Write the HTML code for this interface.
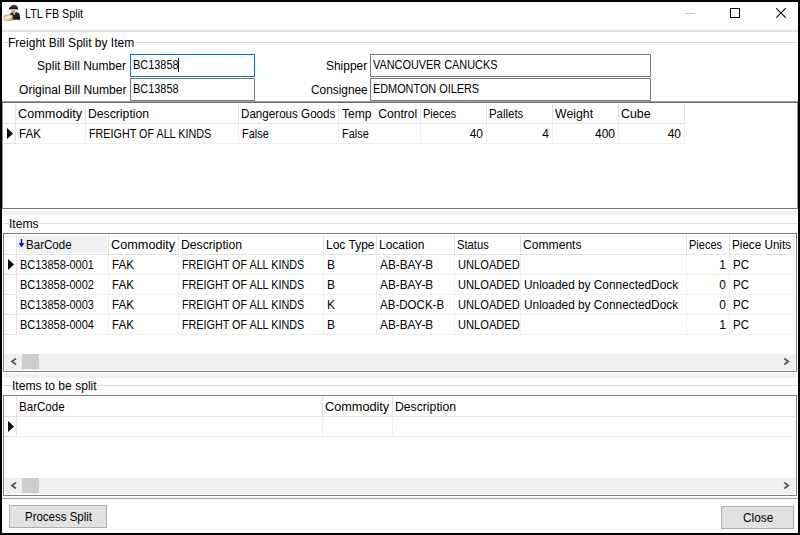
<!DOCTYPE html>
<html><head><meta charset="utf-8"><title>LTL FB Split</title>
<style>
html,body{margin:0;padding:0;}
body{width:800px;height:535px;position:relative;overflow:hidden;background:#fff;font-family:"Liberation Sans", sans-serif;font-size:12px;color:#000}
body>div{position:absolute;box-sizing:content-box}
.t{white-space:nowrap;line-height:14px;height:14px}
</style></head><body>
<div style="left:0px;top:0px;width:800px;height:2px;background:#000"></div>
<div style="left:0px;top:533px;width:800px;height:2px;background:#000"></div>
<div style="left:0px;top:0px;width:2px;height:535px;background:#000"></div>
<div style="left:798px;top:0px;width:2px;height:535px;background:#000"></div>
<svg style="position:absolute;left:2px;top:3px" width="22" height="20" viewBox="0 0 22 20">
<defs><linearGradient id="hat" x1="0" y1="0" x2="0" y2="1"><stop offset="0" stop-color="#505050"/><stop offset="1" stop-color="#0a0a0a"/></linearGradient>
<linearGradient id="bd" x1="0" y1="0" x2="1" y2="1"><stop offset="0" stop-color="#404040"/><stop offset="1" stop-color="#0d0d0d"/></linearGradient>
<linearGradient id="fc" x1="0" y1="0" x2="0" y2="1"><stop offset="0" stop-color="#f0d890"/><stop offset="1" stop-color="#c09040"/></linearGradient>
<linearGradient id="box" x1="0" y1="0" x2="1" y2="1"><stop offset="0" stop-color="#e2cc8e"/><stop offset="0.45" stop-color="#f8ecc8"/><stop offset="1" stop-color="#a88a4e"/></linearGradient></defs>
<path d="M7.3 16.8 L7.3 12 Q8.3 9.2 11.3 9 L14 9 Q18 9.5 18 13.5 L18 16.8 Z" fill="url(#bd)"/>
<ellipse cx="11.4" cy="7.6" rx="2.3" ry="2.1" fill="url(#fc)"/>
<path d="M11.1 9.3 L13.6 9.3 L12.3 12.2 Z" fill="#e8e8e8"/>
<path d="M6.8 6.4 Q6.8 4 8.9 3.2 Q9.9 1.8 12 1.8 Q14.8 1.8 15.6 4 Q16.2 5.2 15.8 6.4 Q11.5 5.5 6.8 6.4 Z" fill="url(#hat)"/>
<path d="M2 13 Q2.4 12 3.6 12 L9.6 12 Q10.6 12.3 10.6 13.3 L10.6 16.6 Q10.4 17.6 9.4 17.6 L3.2 17.6 Q2 17.4 2 16.2 Z" fill="url(#box)" stroke="#9c8150" stroke-width="0.5"/>
</svg>
<div class="t" style="left:25px;top:7px;transform:scaleX(0.8969);transform-origin:left center;color:#000">LTL FB Split</div>
<div style="left:685px;top:13px;width:10px;height:1px;background:#c6c6c6"></div>
<div style="left:730px;top:8px;width:8px;height:8px;border:1px solid #000;box-sizing:content-box"></div>
<svg style="position:absolute;left:776px;top:8px" width="10" height="10" viewBox="0 0 10 10"><path d="M0.3 0.3 L9.7 9.7 M9.7 0.3 L0.3 9.7" stroke="#000" stroke-width="1.05"/></svg>
<div style="left:2px;top:29px;width:796px;height:2px;background:#f0f0f0"></div>
<div style="left:2px;top:31px;width:796px;height:1px;background:#dadada"></div>
<div style="left:3px;top:42px;width:795px;height:1px;background:#dcdcdc"></div>
<div class="t" style="left:8px;top:36px;transform:scaleX(1.0016);transform-origin:left center;background:#fff;color:#000">Freight Bill Split by Item</div>
<div class="t" style="left:37px;top:59px;transform:scaleX(1.0034);transform-origin:left center;color:#000">Split Bill Number</div>
<div class="t" style="left:19px;top:83px;transform:scaleX(1.0066);transform-origin:left center;color:#000">Original Bill Number</div>
<div style="left:130px;top:54px;width:123px;height:21px;border:1px solid #0078d7"></div>
<div style="left:130px;top:78px;width:123px;height:21px;border:1px solid #7a7a7a"></div>
<div class="t" style="left:133px;top:58px;transform:scaleX(0.9104);transform-origin:left center;color:#000">BC13858</div>
<div style="left:178px;top:58px;width:1px;height:14px;background:#000"></div>
<div class="t" style="left:133px;top:82px;transform:scaleX(0.9104);transform-origin:left center;color:#000">BC13858</div>
<div class="t" style="left:326px;top:59px;transform:scaleX(0.995);transform-origin:left center;color:#000">Shipper</div>
<div class="t" style="left:311px;top:83px;transform:scaleX(0.9875);transform-origin:left center;color:#000">Consignee</div>
<div style="left:370px;top:54px;width:279px;height:21px;border:1px solid #7a7a7a"></div>
<div style="left:370px;top:78px;width:279px;height:21px;border:1px solid #7a7a7a"></div>
<div class="t" style="left:373px;top:58px;transform:scaleX(0.9073);transform-origin:left center;color:#000">VANCOUVER CANUCKS</div>
<div class="t" style="left:373px;top:82px;transform:scaleX(0.906);transform-origin:left center;color:#000">EDMONTON OILERS</div>
<div style="left:2px;top:101px;width:796px;height:1px;background:#a0a0a0"></div>
<div style="left:2px;top:102px;width:796px;height:1px;background:#6d6d6d"></div>
<div style="left:2px;top:101px;width:1px;height:108px;background:#8a8a8a"></div>
<div style="left:797px;top:101px;width:1px;height:108px;background:#8a8a8a"></div>
<div style="left:2px;top:208px;width:796px;height:1px;background:#777"></div>
<div style="left:4px;top:123px;width:681px;height:1px;background:#e3e3e3"></div>
<div style="left:4px;top:143px;width:11px;height:1px;background:#e3e3e3"></div>
<div style="left:15px;top:143px;width:670px;height:1px;background:#f0f0f0"></div>
<div style="left:15px;top:104px;width:1px;height:40px;background:#e3e3e3"></div>
<div style="left:85px;top:104px;width:1px;height:19px;background:#e3e3e3"></div>
<div style="left:85px;top:124px;width:1px;height:20px;background:#f0f0f0"></div>
<div style="left:238px;top:104px;width:1px;height:19px;background:#e3e3e3"></div>
<div style="left:238px;top:124px;width:1px;height:20px;background:#f0f0f0"></div>
<div style="left:338px;top:104px;width:1px;height:19px;background:#e3e3e3"></div>
<div style="left:338px;top:124px;width:1px;height:20px;background:#f0f0f0"></div>
<div style="left:420px;top:104px;width:1px;height:19px;background:#e3e3e3"></div>
<div style="left:420px;top:124px;width:1px;height:20px;background:#f0f0f0"></div>
<div style="left:486px;top:104px;width:1px;height:19px;background:#e3e3e3"></div>
<div style="left:486px;top:124px;width:1px;height:20px;background:#f0f0f0"></div>
<div style="left:552px;top:104px;width:1px;height:19px;background:#e3e3e3"></div>
<div style="left:552px;top:124px;width:1px;height:20px;background:#f0f0f0"></div>
<div style="left:618px;top:104px;width:1px;height:19px;background:#e3e3e3"></div>
<div style="left:618px;top:124px;width:1px;height:20px;background:#f0f0f0"></div>
<div style="left:684px;top:104px;width:1px;height:19px;background:#e3e3e3"></div>
<div style="left:684px;top:124px;width:1px;height:20px;background:#f0f0f0"></div>
<div class="t" style="left:18px;top:107px;transform:scaleX(1.0583);transform-origin:left center;color:#000">Commodity</div>
<div class="t" style="left:88px;top:107px;transform:scaleX(1.0172);transform-origin:left center;color:#000">Description</div>
<div class="t" style="left:241px;top:107px;transform:scaleX(0.9688);transform-origin:left center;color:#000">Dangerous Goods</div>
<div class="t" style="left:342px;top:107px;transform:scaleX(1.0068);transform-origin:left center;color:#000">Temp&nbsp; Control</div>
<div class="t" style="left:423px;top:107px;transform:scaleX(0.92);transform-origin:left center;color:#000">Pieces</div>
<div class="t" style="left:489px;top:107px;transform:scaleX(0.9514);transform-origin:left center;color:#000">Pallets</div>
<div class="t" style="left:555px;top:107px;transform:scaleX(1.027);transform-origin:left center;color:#000">Weight</div>
<div class="t" style="left:621px;top:107px;transform:scaleX(1.0333);transform-origin:left center;color:#000">Cube</div>
<div class="t" style="left:19px;top:127px;transform:scaleX(0.9667);transform-origin:left center;color:#000">FAK</div>
<div class="t" style="left:89px;top:127px;transform:scaleX(0.8978);transform-origin:left center;color:#000">FREIGHT OF ALL KINDS</div>
<div class="t" style="left:242px;top:127px;transform:scaleX(0.9107);transform-origin:left center;color:#000">False</div>
<div class="t" style="left:342px;top:127px;transform:scaleX(0.9107);transform-origin:left center;color:#000">False</div>
<div class="t" style="left:83px;width:400px;text-align:right;top:127px;color:#000">40</div>
<div class="t" style="left:149px;width:400px;text-align:right;top:127px;color:#000">4</div>
<div class="t" style="left:215px;width:400px;text-align:right;top:127px;color:#000">400</div>
<div class="t" style="left:281px;width:400px;text-align:right;top:127px;color:#000">40</div>
<svg style="position:absolute;left:7px;top:128px" width="7" height="11"><path d="M0 0 L6 5.5 L0 11 Z" fill="#000"/></svg>
<div style="left:3px;top:211px;width:794px;height:4px;background:#f0f0f0"></div>
<div style="left:3px;top:223px;width:795px;height:1px;background:#dcdcdc"></div>
<div class="t" style="left:9px;top:217px;transform:scaleX(1.0107);transform-origin:left center;background:#fff;color:#000">Items</div>
<div style="left:3px;top:233px;width:792px;height:137px;border:1px solid #7f7f7f"></div>
<div style="left:4px;top:254px;width:790px;height:1px;background:#e3e3e3"></div>
<div style="left:4px;top:274px;width:12px;height:1px;background:#e3e3e3"></div>
<div style="left:16px;top:274px;width:778px;height:1px;background:#f0f0f0"></div>
<div style="left:4px;top:294px;width:12px;height:1px;background:#e3e3e3"></div>
<div style="left:16px;top:294px;width:778px;height:1px;background:#f0f0f0"></div>
<div style="left:4px;top:314px;width:12px;height:1px;background:#e3e3e3"></div>
<div style="left:16px;top:314px;width:778px;height:1px;background:#f0f0f0"></div>
<div style="left:4px;top:334px;width:12px;height:1px;background:#e3e3e3"></div>
<div style="left:16px;top:334px;width:778px;height:1px;background:#f0f0f0"></div>
<div style="left:16px;top:235px;width:1px;height:100px;background:#e3e3e3"></div>
<div style="left:108px;top:235px;width:1px;height:19px;background:#e3e3e3"></div>
<div style="left:108px;top:255px;width:1px;height:80px;background:#f0f0f0"></div>
<div style="left:178px;top:235px;width:1px;height:19px;background:#e3e3e3"></div>
<div style="left:178px;top:255px;width:1px;height:80px;background:#f0f0f0"></div>
<div style="left:323px;top:235px;width:1px;height:19px;background:#e3e3e3"></div>
<div style="left:323px;top:255px;width:1px;height:80px;background:#f0f0f0"></div>
<div style="left:376px;top:235px;width:1px;height:19px;background:#e3e3e3"></div>
<div style="left:376px;top:255px;width:1px;height:80px;background:#f0f0f0"></div>
<div style="left:454px;top:235px;width:1px;height:19px;background:#e3e3e3"></div>
<div style="left:454px;top:255px;width:1px;height:80px;background:#f0f0f0"></div>
<div style="left:520px;top:235px;width:1px;height:19px;background:#e3e3e3"></div>
<div style="left:520px;top:255px;width:1px;height:80px;background:#f0f0f0"></div>
<div style="left:686px;top:235px;width:1px;height:19px;background:#e3e3e3"></div>
<div style="left:686px;top:255px;width:1px;height:80px;background:#f0f0f0"></div>
<div style="left:729px;top:235px;width:1px;height:19px;background:#e3e3e3"></div>
<div style="left:729px;top:255px;width:1px;height:80px;background:#f0f0f0"></div>
<div style="left:793px;top:235px;width:1px;height:19px;background:#e3e3e3"></div>
<div style="left:793px;top:255px;width:1px;height:80px;background:#f0f0f0"></div>
<div style="left:18px;top:236px;width:89px;height:17px;background:#f0f0f0"></div>
<svg style="position:absolute;left:18px;top:239px" width="7" height="9"><path d="M3.5 0 L3.5 5" stroke="#0000ff" stroke-width="1.4"/><path d="M0.6 4.3 L6.4 4.3 L3.5 8.3 Z" fill="#0000ff"/></svg>
<div class="t" style="left:26px;top:238px;transform:scaleX(0.963);transform-origin:left center;color:#000">BarCode</div>
<div class="t" style="left:111px;top:238px;transform:scaleX(1.0583);transform-origin:left center;color:#000">Commodity</div>
<div class="t" style="left:181px;top:238px;transform:scaleX(1.0172);transform-origin:left center;color:#000">Description</div>
<div class="t" style="left:326px;top:238px;transform:scaleX(1.0);transform-origin:left center;color:#000">Loc Type</div>
<div class="t" style="left:379px;top:238px;transform:scaleX(1.0);transform-origin:left center;color:#000">Location</div>
<div class="t" style="left:457px;top:238px;transform:scaleX(0.9333);transform-origin:left center;color:#000">Status</div>
<div class="t" style="left:523px;top:238px;transform:scaleX(1.0088);transform-origin:left center;color:#000">Comments</div>
<div class="t" style="left:689px;top:238px;transform:scaleX(0.92);transform-origin:left center;color:#000">Pieces</div>
<div class="t" style="left:732px;top:238px;transform:scaleX(0.9729);transform-origin:left center;color:#000">Piece Units</div>
<div class="t" style="left:20px;top:258px;transform:scaleX(0.9152);transform-origin:left center;color:#000">BC13858-0001</div>
<div class="t" style="left:112px;top:258px;transform:scaleX(0.9667);transform-origin:left center;color:#000">FAK</div>
<div class="t" style="left:182px;top:258px;transform:scaleX(0.8978);transform-origin:left center;color:#000">FREIGHT OF ALL KINDS</div>
<div class="t" style="left:327px;top:258px;color:#000">B</div>
<div class="t" style="left:380px;top:258px;transform:scaleX(0.9849);transform-origin:left center;color:#000">AB-BAY-B</div>
<div class="t" style="left:458px;top:258px;transform:scaleX(0.9262);transform-origin:left center;color:#000">UNLOADED</div>
<div class="t" style="left:326px;width:400px;text-align:right;top:258px;color:#000">1</div>
<div class="t" style="left:733px;top:258px;transform:scaleX(0.96);transform-origin:left center;color:#000">PC</div>
<div class="t" style="left:20px;top:278px;transform:scaleX(0.9152);transform-origin:left center;color:#000">BC13858-0002</div>
<div class="t" style="left:112px;top:278px;transform:scaleX(0.9667);transform-origin:left center;color:#000">FAK</div>
<div class="t" style="left:182px;top:278px;transform:scaleX(0.8978);transform-origin:left center;color:#000">FREIGHT OF ALL KINDS</div>
<div class="t" style="left:327px;top:278px;color:#000">B</div>
<div class="t" style="left:380px;top:278px;transform:scaleX(0.9849);transform-origin:left center;color:#000">AB-BAY-B</div>
<div class="t" style="left:458px;top:278px;transform:scaleX(0.9262);transform-origin:left center;color:#000">UNLOADED</div>
<div class="t" style="left:524px;top:278px;transform:scaleX(0.9873);transform-origin:left center;color:#000">Unloaded by ConnectedDock</div>
<div class="t" style="left:326px;width:400px;text-align:right;top:278px;color:#000">0</div>
<div class="t" style="left:733px;top:278px;transform:scaleX(0.96);transform-origin:left center;color:#000">PC</div>
<div class="t" style="left:20px;top:298px;transform:scaleX(0.9152);transform-origin:left center;color:#000">BC13858-0003</div>
<div class="t" style="left:112px;top:298px;transform:scaleX(0.9667);transform-origin:left center;color:#000">FAK</div>
<div class="t" style="left:182px;top:298px;transform:scaleX(0.8978);transform-origin:left center;color:#000">FREIGHT OF ALL KINDS</div>
<div class="t" style="left:327px;top:298px;color:#000">K</div>
<div class="t" style="left:380px;top:298px;transform:scaleX(0.9621);transform-origin:left center;color:#000">AB-DOCK-B</div>
<div class="t" style="left:458px;top:298px;transform:scaleX(0.9262);transform-origin:left center;color:#000">UNLOADED</div>
<div class="t" style="left:524px;top:298px;transform:scaleX(0.9873);transform-origin:left center;color:#000">Unloaded by ConnectedDock</div>
<div class="t" style="left:326px;width:400px;text-align:right;top:298px;color:#000">0</div>
<div class="t" style="left:733px;top:298px;transform:scaleX(0.96);transform-origin:left center;color:#000">PC</div>
<div class="t" style="left:20px;top:318px;transform:scaleX(0.9152);transform-origin:left center;color:#000">BC13858-0004</div>
<div class="t" style="left:112px;top:318px;transform:scaleX(0.9667);transform-origin:left center;color:#000">FAK</div>
<div class="t" style="left:182px;top:318px;transform:scaleX(0.8978);transform-origin:left center;color:#000">FREIGHT OF ALL KINDS</div>
<div class="t" style="left:327px;top:318px;color:#000">B</div>
<div class="t" style="left:380px;top:318px;transform:scaleX(0.9849);transform-origin:left center;color:#000">AB-BAY-B</div>
<div class="t" style="left:458px;top:318px;transform:scaleX(0.9262);transform-origin:left center;color:#000">UNLOADED</div>
<div class="t" style="left:326px;width:400px;text-align:right;top:318px;color:#000">1</div>
<div class="t" style="left:733px;top:318px;transform:scaleX(0.96);transform-origin:left center;color:#000">PC</div>
<svg style="position:absolute;left:8px;top:259px" width="7" height="11"><path d="M0 0 L6 5.5 L0 11 Z" fill="#000"/></svg>
<div style="left:5px;top:354px;width:790px;height:16px;background:#f0f0f0"></div>
<div style="left:22px;top:354px;width:17px;height:15px;background:#cdcdcd"></div>
<svg style="position:absolute;left:9px;top:357px" width="9" height="10"><path d="M7 1.5 L3 4.5 L7 7.5" stroke="#606060" stroke-width="2" fill="none"/></svg>
<svg style="position:absolute;left:782px;top:357px" width="9" height="10"><path d="M2.2 1.5 L6.2 4.5 L2.2 7.5" stroke="#606060" stroke-width="2" fill="none"/></svg>
<div style="left:3px;top:374px;width:794px;height:4px;background:#f0f0f0"></div>
<div style="left:3px;top:385px;width:795px;height:1px;background:#dcdcdc"></div>
<div class="t" style="left:12px;top:379px;transform:scaleX(1.0072);transform-origin:left center;background:#fff;color:#000">Items to be split</div>
<div style="left:3px;top:395px;width:792px;height:99px;border:1px solid #7f7f7f"></div>
<div style="left:4px;top:416px;width:790px;height:1px;background:#e3e3e3"></div>
<div style="left:4px;top:436px;width:12px;height:1px;background:#e3e3e3"></div>
<div style="left:16px;top:436px;width:778px;height:1px;background:#f0f0f0"></div>
<div style="left:16px;top:397px;width:1px;height:40px;background:#e3e3e3"></div>
<div style="left:322px;top:397px;width:1px;height:19px;background:#e3e3e3"></div>
<div style="left:322px;top:417px;width:1px;height:20px;background:#f0f0f0"></div>
<div style="left:392px;top:397px;width:1px;height:19px;background:#e3e3e3"></div>
<div style="left:392px;top:417px;width:1px;height:20px;background:#f0f0f0"></div>
<div class="t" style="left:19px;top:400px;transform:scaleX(0.963);transform-origin:left center;color:#000">BarCode</div>
<div class="t" style="left:325px;top:400px;transform:scaleX(1.0583);transform-origin:left center;color:#000">Commodity</div>
<div class="t" style="left:395px;top:400px;transform:scaleX(1.0172);transform-origin:left center;color:#000">Description</div>
<svg style="position:absolute;left:8px;top:421px" width="7" height="11"><path d="M0 0 L6 5.5 L0 11 Z" fill="#000"/></svg>
<div style="left:5px;top:478px;width:790px;height:16px;background:#f0f0f0"></div>
<div style="left:22px;top:478px;width:17px;height:15px;background:#cdcdcd"></div>
<svg style="position:absolute;left:9px;top:481px" width="9" height="10"><path d="M7 1.5 L3 4.5 L7 7.5" stroke="#606060" stroke-width="2" fill="none"/></svg>
<svg style="position:absolute;left:782px;top:481px" width="9" height="10"><path d="M2.2 1.5 L6.2 4.5 L2.2 7.5" stroke="#606060" stroke-width="2" fill="none"/></svg>
<div style="left:2px;top:498px;width:796px;height:1px;background:#a0a0a0"></div>
<div style="left:9px;top:505px;width:96px;height:21px;background:#e1e1e1;border:1px solid #adadad"></div>
<div class="t" style="left:25px;top:510px;transform:scaleX(0.9565);transform-origin:left center;color:#000">Process Split</div>
<div style="left:721px;top:506px;width:71px;height:21px;background:#e1e1e1;border:1px solid #adadad"></div>
<div class="t" style="left:743px;top:511px;transform:scaleX(0.9914);transform-origin:left center;color:#000">Close</div>
</body></html>
